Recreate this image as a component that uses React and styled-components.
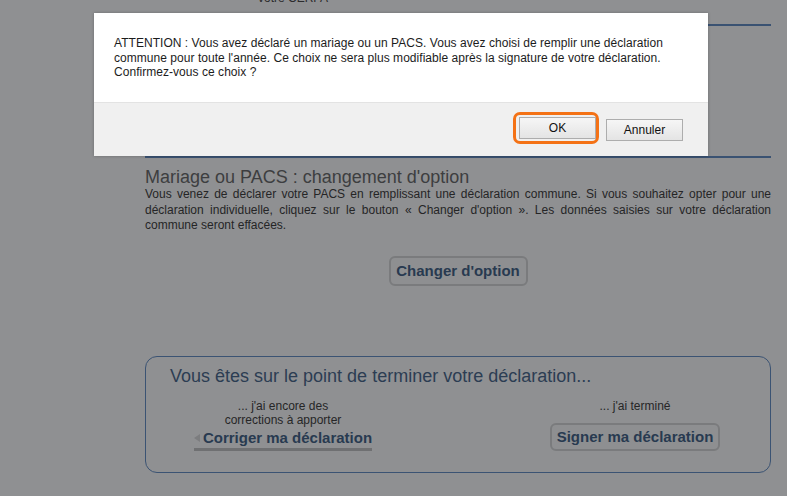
import React from "react";
import styled, { createGlobalStyle } from "styled-components";

const Global = createGlobalStyle`
  html, body { margin: 0; padding: 0; }
  body {
    background: #8f9092;
    font-family: "Liberation Sans", Arial, sans-serif;
    width: 787px;
    height: 496px;
    overflow: hidden;
  }
`;

const Page = styled.div`
  position: relative;
  width: 787px;
  height: 496px;
  overflow: hidden;
`;

const Column = styled.main`
  margin-left: 145px;
  width: 626px;
  display: flex;
  flex-direction: column;
`;

const CerfaNote = styled.div`
  margin-top: -9px;
  padding-left: 113px;
  font-size: 12px;
  line-height: 14px;
  color: #2b2b2c;
`;

const Rule = styled.div`
  height: 2px;
  background: #3a5272;
  margin-top: ${(p) => p.$top}px;
`;

const Heading = styled.h2`
  margin: 9px 0 0;
  font-weight: normal;
  font-size: 18px;
  line-height: 20px;
  color: #3d3e40;
`;

const Para = styled.p`
  margin: 0;
  font-size: 12px;
  line-height: 15.5px;
  text-align: justify;
  color: #252526;
`;

const CenterRow = styled.div`
  display: flex;
  justify-content: center;
  margin-top: ${(p) => p.$top}px;
`;

const GhostButton = styled.button`
  font-family: "Liberation Sans", Arial, sans-serif;
  font-weight: bold;
  font-size: 15px;
  color: #283a50;
  background: #8e8f91;
  border: 2px solid #7a7b7d;
  border-radius: 6px;
  height: ${(p) => p.$h}px;
  width: ${(p) => p.$w}px;
  padding: 0;
`;

const EndBox = styled.section`
  margin-top: 70px;
  height: 117px;
  box-sizing: border-box;
  border: 1px solid #3b5373;
  border-radius: 12px;
  padding: 8px 0 0 24px;
`;

const BoxTitle = styled.h3`
  margin: 0;
  font-weight: normal;
  font-size: 18px;
  line-height: 22px;
  color: #2c3d53;
`;

const Choices = styled.div`
  display: grid;
  grid-template-columns: 200px 200px;
  column-gap: 152px;
  margin-left: 13px;
  margin-top: 12px;
`;

const Choice = styled.div`
  display: flex;
  flex-direction: column;
  align-items: center;
`;

const Hint = styled.div`
  font-size: 12px;
  line-height: 14px;
  color: #262627;
  text-align: center;
`;

const BackLink = styled.a`
  display: flex;
  align-items: center;
  gap: 3px;
  margin-top: 2px;
  padding-bottom: 1px;
  border-bottom: 3px solid #6f7072;
  font-weight: bold;
  font-size: 15px;
  line-height: 18px;
  color: #283a50;
  text-decoration: none;
`;

const Arrow = styled.span`
  width: 0;
  height: 0;
  border-top: 4px solid transparent;
  border-bottom: 4px solid transparent;
  border-right: 6px solid #7c7d7f;
`;

const Dialog = styled.div`
  position: absolute;
  left: 94px;
  top: 13px;
  width: 614px;
  height: 143px;
  background: #fff;
  display: flex;
  flex-direction: column;
  box-shadow: 0 0 3px rgba(0, 0, 0, 0.25);
`;

const DialogBody = styled.div`
  flex: 1;
  padding: 23px 20px 0 20px;
  font-size: 12px;
  line-height: 14.5px;
  letter-spacing: 0.04px;
  color: #1c1c1c;
`;

const DialogFooter = styled.div`
  height: 53px;
  background: #f0f0f0;
  border-top: 1px solid #e3e3e3;
  display: flex;
  justify-content: flex-end;
  align-items: center;
  gap: 7px;
  padding-right: 25px;
`;

const Highlight = styled.div`
  border: 3px solid #f47216;
  border-radius: 7px;
  padding: 2px 0 2px 3px;
  margin-top: -4px;
`;

const SysButton = styled.button`
  font-family: "Liberation Sans", Arial, sans-serif;
  font-size: 12px;
  color: #111;
  width: ${(p) => p.$w}px;
  height: 22px;
  padding: 0;
  background: linear-gradient(#f6f6f6, #e4e4e4);
  border: 1px solid #adadad;
  border-radius: 0;
`;

export default function App() {
  return (
    <Page>
      <Global />
      <Column>
        <CerfaNote>votre CERFA</CerfaNote>
        <Rule $top={19} />
        <Rule $top={130} />
        <Heading>Mariage ou PACS : changement d'option</Heading>
        <Para>
          Vous venez de déclarer votre PACS en remplissant une déclaration commune. Si vous
          souhaitez opter pour une déclaration individuelle, cliquez sur le bouton « Changer
          d'option ». Les données saisies sur votre déclaration commune seront effacées.
        </Para>
        <CenterRow $top={22}>
          <GhostButton $w={139} $h={30}>Changer d'option</GhostButton>
        </CenterRow>
        <EndBox>
          <BoxTitle>Vous êtes sur le point de terminer votre déclaration...</BoxTitle>
          <Choices>
            <Choice>
              <Hint>
                ... j'ai encore des
                <br />
                corrections à apporter
              </Hint>
              <BackLink href="#">
                <Arrow />
                Corriger ma déclaration
              </BackLink>
            </Choice>
            <Choice>
              <Hint>... j'ai terminé</Hint>
              <CenterRow $top={10}>
                <GhostButton $w={170} $h={28}>Signer ma déclaration</GhostButton>
              </CenterRow>
            </Choice>
          </Choices>
        </EndBox>
      </Column>
      <Dialog role="dialog">
        <DialogBody>
          ATTENTION : Vous avez déclaré un mariage ou un PACS. Vous avez choisi de remplir une
          déclaration commune pour toute l'année. Ce choix ne sera plus modifiable après la
          signature de votre déclaration. Confirmez-vous ce choix ?
        </DialogBody>
        <DialogFooter>
          <Highlight>
            <SysButton $w={77}>OK</SysButton>
          </Highlight>
          <SysButton $w={77}>Annuler</SysButton>
        </DialogFooter>
      </Dialog>
    </Page>
  );
}
